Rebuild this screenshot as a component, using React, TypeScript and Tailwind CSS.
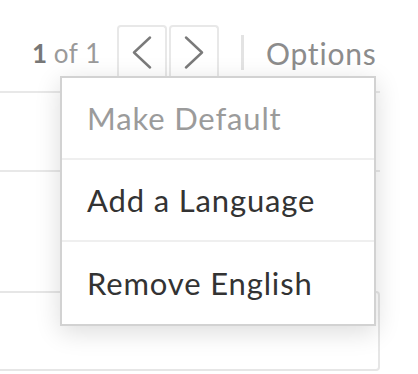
import React from 'react';

const Chevron: React.FC<{ dir: 'left' | 'right' }> = ({ dir }) => (
  <svg width="20" height="33" viewBox="0 0 20 33" fill="none" stroke="#7a7a7a" strokeWidth="2.4" strokeLinecap="round" strokeLinejoin="round">
    {dir === 'left' ? <path d="M18 1.5 L2 16.5 L18 31.5" /> : <path d="M2 1.5 L18 16.5 L2 31.5" />}
  </svg>
);

const App: React.FC = () => {
  const items = [
    { label: 'Make Default', muted: true },
    { label: 'Add a Language', muted: false },
    { label: 'Remove English', muted: false },
  ];

  return (
    <div className="relative w-[418px] h-[374px] overflow-hidden bg-white" style={{ fontFamily: 'Lato, "Open Sans", sans-serif' }}>
      {/* toolbar */}
      <div className="flex items-end h-[77px] pl-[32px]">
        <div className="flex items-baseline self-center mt-[29px] text-[26px] tracking-[0.6px] text-[#9a9a9a]">
          <span className="font-bold text-[#777]">1</span>
          <span className="ml-[6px]">of 1</span>
        </div>
        <div className="flex ml-[16px] gap-[2px]">
          <button className="w-[50px] h-[52px] flex items-center justify-center border-2 border-b-0 border-[#e8e8e8] rounded-t-[4px] pt-[1px]">
            <Chevron dir="left" />
          </button>
          <button className="w-[50px] h-[52px] flex items-center justify-center border-2 border-b-0 border-[#e8e8e8] rounded-t-[4px] pt-[1px]">
            <Chevron dir="right" />
          </button>
        </div>
        <div className="w-[3px] h-[35px] bg-[#e3e3e3] ml-[22px] mb-[7px]" />
        <div className="ml-[22px] self-center mt-[29px] text-[30px] tracking-[0.8px] text-[#8c8c8c]">Options</div>
      </div>

      {/* content behind menu */}
      <div className="w-[380px]">
        <div className="h-[16px] border-b-2 border-[#e8e8e8]" />
        <div className="h-[79px] border-b-2 border-[#e8e8e8]" />
        <div className="h-[119px]" />
        <div className="h-[80px] border-2 border-l-0 border-[#e6e6e6] rounded-r-[4px]" />
      </div>

      {/* dropdown */}
      <div className="absolute left-[60px] top-[76px] w-[316px] bg-white border-2 border-[#d2d2d2] shadow-[0_6px_24px_rgba(0,0,0,0.14)]">
        {items.map((item, i) => (
          <div
            key={item.label}
            className={`h-[82px] flex items-center pl-[25px] text-[31px] tracking-[0.85px] ${i < items.length - 1 ? 'border-b-2 border-[#efefef]' : ''} ${item.muted ? 'text-[#9b9b9b]' : 'text-[#333]'}`}
          >
            {item.label}
          </div>
        ))}
      </div>
    </div>
  );
};

export default App;
